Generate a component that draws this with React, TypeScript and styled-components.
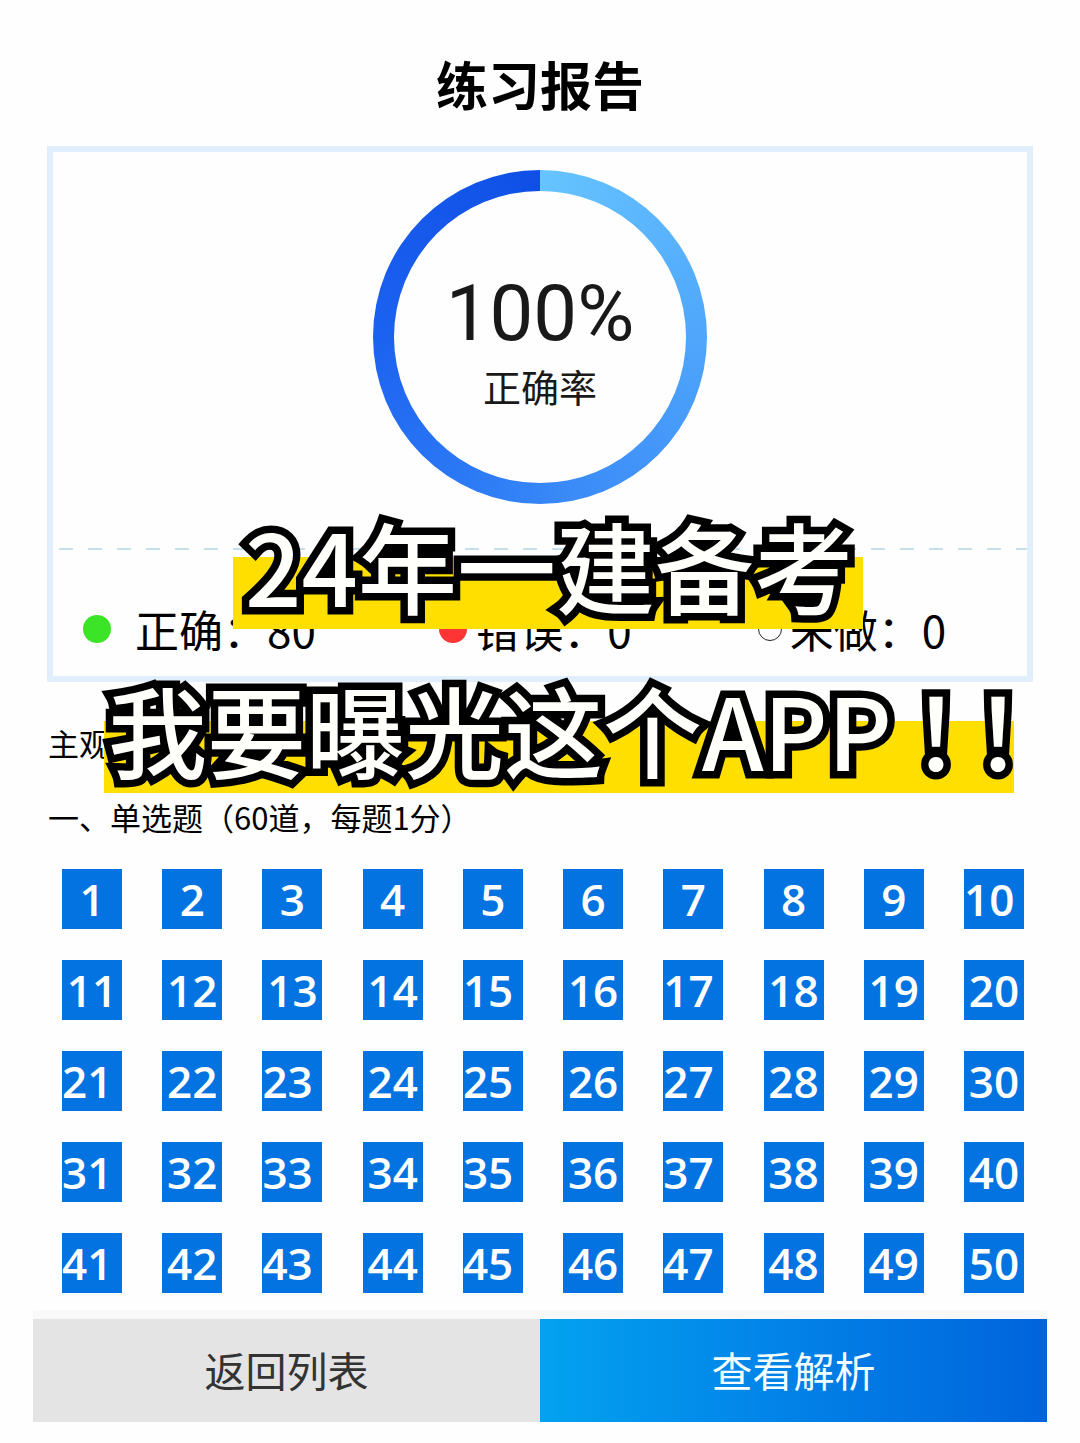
import React from "react";
import styled, { createGlobalStyle } from "styled-components";

const GlobalStyle = createGlobalStyle`
  * {
    box-sizing: border-box;
  }
  body {
    margin: 0;
    background: #fefefe;
    color: #000;
    font-family: "Noto Sans CJK SC", "Noto Sans", sans-serif;
  }
`;

const Page = styled.main`
  position: relative;
  padding: 54px 33px 21px;
`;

const Title = styled.h1`
  margin: 0 0 32px;
  text-align: center;
  font-size: 52px;
  line-height: 60px;
  font-weight: 700;
`;

const ReportCard = styled.section`
  margin: 0 14px;
  border: 6px solid #e1eefc;
  padding: 18px 0 14px;
`;

const Ring = styled.div`
  width: 334px;
  height: 334px;
  margin: 0 auto 44px;
  padding: 21px;
  border-radius: 50%;
  background: conic-gradient(
    #66c4ff 0deg,
    #4fa6fb 90deg,
    #3c8cf8 165deg,
    #2b78f5 210deg,
    #1c62f0 270deg,
    #0f4fe6 360deg
  );
`;

const RingFace = styled.div`
  display: flex;
  flex-direction: column;
  align-items: center;
  width: 100%;
  height: 100%;
  padding-top: 78px;
  border-radius: 50%;
  background: #fefefe;
  color: #191919;
`;

const Percent = styled.strong`
  font-family: Roboto, "Open Sans", sans-serif;
  font-size: 78px;
  line-height: 90px;
  font-weight: 400;
`;

const PercentLabel = styled.span`
  font-size: 38px;
  line-height: 54px;
`;

const DashedRule = styled.hr`
  height: 2px;
  margin: 0 0 46px 6px;
  border: 0;
  background: repeating-linear-gradient(90deg, #c6e0e8 0 14px, transparent 14px 29px);
`;

const Stats = styled.ul`
  display: grid;
  grid-template-columns: 356fr 318fr 269fr;
  margin: 0;
  padding: 0 0 0 30px;
  list-style: none;
`;

const Stat = styled.li<{ $gap: number }>`
  display: flex;
  align-items: center;
  gap: ${(p) => p.$gap}px;
  font-size: 44px;
  line-height: 66px;
  white-space: nowrap;
`;

const Dot = styled.i<{ $color: string }>`
  width: 28px;
  height: 28px;
  border-radius: 50%;
  background: ${(p) => p.$color};
`;

const HollowDot = styled.i`
  width: 24px;
  height: 24px;
  border: 1px solid #222;
  border-radius: 50%;
`;

const Sections = styled.div`
  margin: 24px 15px 15px;
`;

const SectionHeading = styled.h2`
  margin: 0;
  font-size: 31px;
  line-height: 74px;
  font-weight: 400;
`;

const AnswerGrid = styled.div`
  display: grid;
  grid-template-columns: repeat(10, 60px);
  justify-content: space-between;
  row-gap: 31px;
  margin: 0 23px 17px 29px;
`;

const Answer = styled.button<{ $flush: boolean }>`
  display: flex;
  align-items: center;
  justify-content: ${(p) => (p.$flush ? "flex-start" : "center")};
  height: 60px;
  padding: 0;
  border: 0;
  background: #0273e0;
  color: #fff;
  font-family: "Open Sans", "Noto Sans", sans-serif;
  font-size: 44px;
  line-height: 60px;
  font-weight: 600;
  cursor: pointer;
`;

const Footer = styled.footer`
  display: grid;
  grid-template-columns: 1fr 1fr;
  border-top: 9px solid #f8f8f8;
`;

const FooterButton = styled.button<{ $primary?: boolean }>`
  height: 103px;
  padding: 0 0 4px;
  border: 0;
  background: ${(p) =>
    p.$primary ? "linear-gradient(90deg, #03a2f0 0%, #0284e8 45%, #0064dc 100%)" : "#e4e4e4"};
  color: ${(p) => (p.$primary ? "#f4fdff" : "#333")};
  font-family: inherit;
  font-size: 41px;
  line-height: 60px;
  cursor: pointer;
`;

const Banner = styled.div`
  position: absolute;
  top: 482px;
  left: 38px;
  right: 0;
  display: flex;
  justify-content: center;
  pointer-events: none;
`;

const BannerText = styled.div`
  display: flex;
  flex-direction: column;
  align-items: center;
`;

const BannerLine = styled.p<{ $before: number; $after: number }>`
  margin: 0;
  padding: 0 ${(p) => p.$after}px 0 ${(p) => p.$before}px;
  background: linear-gradient(#ffdf00, #ffdf00) no-repeat 0 75px / 100% 72px;
  color: #fffffc;
  font-size: 99px;
  line-height: 164px;
  font-weight: 500;
  white-space: nowrap;
  -webkit-text-stroke: 15px #000;
  paint-order: stroke fill;

  &:first-child {
    margin-right: 22px;
  }
`;

const Marks = styled.span`
  display: inline-flex;
  margin: 0 -15px 0 13px;
  font-family: "Noto Sans CJK JP", sans-serif;
`;

const Mark = styled.span`
  display: flex;
  justify-content: center;
  width: 62px;
`;

const TOTAL = 50;
const numbers = Array.from({ length: TOTAL }, (_, i) => i + 1);

// Two-digit numbers in the odd columns sit flush with the left side of the tile.
const isFlush = (n: number) =>
  n === 10 || n === 15 || n === 17 || (n > 20 && n % 2 === 1 && n % 10 !== 9);

export default function App() {
  return (
    <>
      <GlobalStyle />
      <Page>
        <Title>练习报告</Title>
        <ReportCard>
          <Ring>
            <RingFace>
              <Percent>100%</Percent>
              <PercentLabel>正确率</PercentLabel>
            </RingFace>
          </Ring>
          <DashedRule />
          <Stats>
            <Stat $gap={24}>
              <Dot $color="#3be427" />
              正确：80
            </Stat>
            <Stat $gap={8}>
              <Dot $color="#ff3434" />
              错误：0
            </Stat>
            <Stat $gap={8}>
              <HollowDot />
              未做：0
            </Stat>
          </Stats>
        </ReportCard>
        <Sections>
          <SectionHeading>主观题</SectionHeading>
          <SectionHeading>一、单选题（60道，每题1分）</SectionHeading>
        </Sections>
        <AnswerGrid>
          {numbers.map((n) => (
            <Answer key={n} type="button" $flush={isFlush(n)}>
              {n}
            </Answer>
          ))}
        </AnswerGrid>
        <Footer>
          <FooterButton type="button">返回列表</FooterButton>
          <FooterButton type="button" $primary>
            查看解析
          </FooterButton>
        </Footer>
        <Banner>
          <BannerText>
            <BannerLine $before={12} $after={10}>
              24年一建备考
            </BannerLine>
            <BannerLine $before={4} $after={0}>
              我要曝光这个APP
              <Marks>
                <Mark>！</Mark>
                <Mark>！</Mark>
              </Marks>
            </BannerLine>
          </BannerText>
        </Banner>
      </Page>
    </>
  );
}
